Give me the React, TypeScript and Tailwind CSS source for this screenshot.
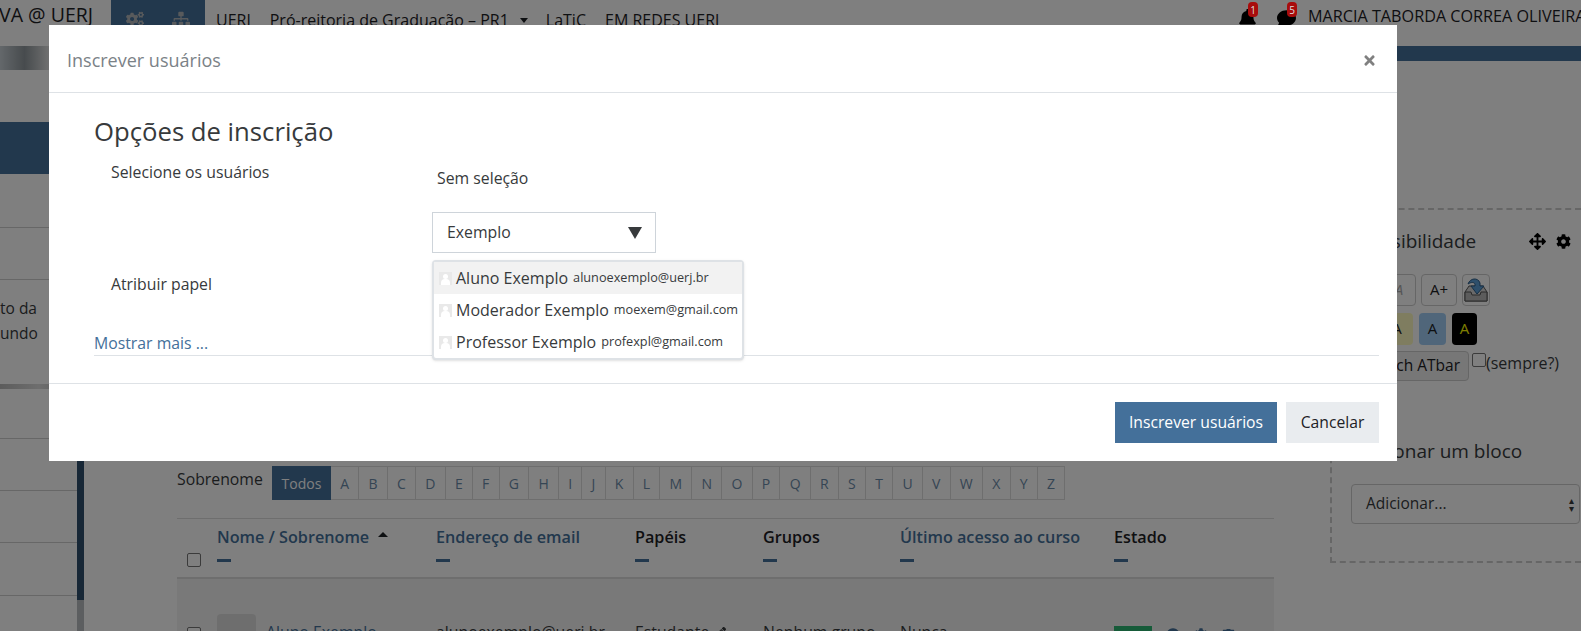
import { FaArrowsAlt, FaBell, FaCog, FaCogs, FaComment, FaInfoCircle, FaPencilAlt, FaSitemap, FaTimes, FaTrash } from 'react-icons/fa'

const LETTERS = 'ABCDEFGHIJKLMNOPQRSTUVWXYZ'.split('')
const COLUMNS = [
  { label: 'Endereço de email', link: true, width: 'w-[199px]' },
  { label: 'Papéis', link: false, width: 'w-[128px]' },
  { label: 'Grupos', link: false, width: 'w-[137px]' },
  { label: 'Último acesso ao curso', link: true, width: 'w-[214px]' },
  { label: 'Estado', link: false, width: 'w-[160px]' },
]
const USERS = [
  { name: 'Aluno Exemplo', email: 'alunoexemplo@uerj.br', active: true },
  { name: 'Moderador Exemplo', email: 'moexem@gmail.com', active: false },
  { name: 'Professor Exemplo', email: 'profexpl@gmail.com', active: false },
]

function Avatar() {
  return (
    <span className="relative inline-block h-[13px] w-[13px] shrink-0 overflow-hidden bg-[#e9e9e9]">
      <span className="absolute left-[4px] top-[2px] h-[5px] w-[5px] rounded-full bg-white" />
      <span className="absolute left-[2px] top-[7px] h-[8px] w-[9px] rounded-t bg-white" />
    </span>
  )
}

function Badge({ value }: { value: string }) {
  return (
    <span className="absolute -right-[1px] -top-[7px] flex h-[15px] w-[10px] items-center justify-center rounded-sm bg-[#a80c0c] text-[10px] leading-none text-[#dddddd]">
      {value}
    </span>
  )
}

function SaveIcon() {
  return (
    <svg width="26" height="28" viewBox="0 0 26 28">
      <path d="M2 16 L6 10 H20 L24 16 V25 H2 Z" fill="#d4d4d4" stroke="#555555" strokeWidth="1" />
      <path d="M2 16 H8 L9 19 H17 L18 16 H24 V25 H2 Z" fill="#b8b8b8" stroke="#555555" strokeWidth="1" />
      <path d="M5 8 C7 2 15 1 17 7 L17 10 H21 L14 18 L8 10 H12 L12 8 C11 6 8 6 5 8 Z" fill="#5c9fd6" stroke="#2f5f8a" strokeWidth="1" />
    </svg>
  )
}

function Nav() {
  return (
    <header className="flex h-[46px] shrink-0 items-start text-[16px] text-[#1d2125]">
      <div className="flex w-[111px] shrink-0 justify-end overflow-hidden pr-[18px] text-[19.5px]">
        <span className="whitespace-nowrap">AVA @ UERJ</span>
      </div>
      <div className="flex h-[46px] w-[94px] shrink-0 items-start gap-[28px] bg-[#44709a] pl-[15px] pt-[10px] text-[#b0b4b8]">
        <FaCogs size={18} />
        <FaSitemap size={18} />
      </div>
      <nav className="ml-[11px] mt-[8px] flex items-center gap-[19px] whitespace-nowrap">
        <span>UERJ</span>
        <span className="flex items-center gap-[11px]">
          Pró-reitoria de Graduação – PR1
          <span className="-mr-[1px] h-0 w-0 border-x-[4px] border-t-[5px] border-x-transparent border-t-[#1d2125]" />
        </span>
        <span>LaTiC</span>
        <span>EM REDES UERJ</span>
      </nav>
      <div className="ml-auto mt-[4px] flex w-[343px] shrink-0 items-start whitespace-nowrap">
        <span className="relative z-10 mt-[5px] w-[19px] text-black">
          <FaBell size={19} />
          <Badge value="1" />
        </span>
        <span className="relative z-10 ml-[20px] mt-[5px] w-[19px] text-black">
          <FaComment size={19} />
          <Badge value="5" />
        </span>
        <span className="ml-[12px] text-[16.2px]">MARCIA TABORDA CORREA OLIVEIRA</span>
      </div>
    </header>
  )
}

function Sidebar() {
  return (
    <aside className="relative w-[77px] shrink-0 text-[15.5px] text-[#373a3c]">
      <div className="h-[24px] w-[49px] bg-gradient-to-r from-[#c8d0d6] via-[#8f979c] to-[#e0e0e0]" />
      <div className="mt-[52px] h-[52px] bg-[#44709a]" />
      <div className="h-[54px] border-b border-[#cfcfcf]" />
      <div className="h-[52px] border-b border-[#cfcfcf]" />
      <div className="h-[104px] pt-[16px] leading-[25px]">
        <div className="w-[36px] whitespace-nowrap text-right">to da</div>
        <div className="w-[33px] whitespace-nowrap text-right">undo</div>
      </div>
      <div className="h-[5px] bg-gradient-to-r from-[#b8b8b8] via-[#dddddd] to-[#b0b0b0]" />
      <div className="h-[50px] border-b border-[#cfcfcf]" />
      <div className="h-[52px] border-b border-[#cfcfcf]" />
      <div className="h-[52px] border-b border-[#cfcfcf]" />
      <div className="h-[53px] border-b border-[#cfcfcf]" />
    </aside>
  )
}

function Main() {
  return (
    <main className="flex-1 pl-[93px] pt-[420px] text-[#373a3c]">
      <div className="flex items-start">
        <span className="mt-[2px] w-[95px] text-[15.8px]">Sobrenome</span>
        <div className="flex h-[34px] items-center text-[14px] text-[#6b8aa8]">
          <span className="flex h-[34px] w-[59px] items-center justify-center bg-[#44709a] text-white">Todos</span>
          <div className="flex h-[34px] border border-l-0 border-[#dddddd]">
            {LETTERS.map((letter) => (
              <span key={letter} className="flex items-center border-r border-[#dddddd] px-[9.23px] last:border-r-0">{letter}</span>
            ))}
          </div>
        </div>
      </div>
      <table className="mt-[18px] w-[1097px] table-fixed border-t border-[#dddddd] text-[15.8px]">
        <thead>
          <tr className="border-b-2 border-[#dddddd] text-left text-[16.2px]">
            <th className="h-[59px] w-[40px] pl-[10px] align-bottom pb-[10px]">
              <span className="block h-[14px] w-[14px] rounded-[2px] border border-[#767676] bg-white" />
            </th>
            <th className="w-[219px] align-top pt-[6px] font-semibold text-[#44709a]">
              <div className="flex items-center gap-[9px]">
                Nome / Sobrenome
                <span className="mb-[5px] h-0 w-0 border-x-[5px] border-b-[5px] border-x-transparent border-b-[#1d2125]" />
              </div>
              <span className="mt-[10px] block h-[3px] w-[14px] bg-[#44709a]" />
            </th>
            {COLUMNS.map((col) => (
              <th key={col.label} className={`${col.width} align-top pt-[6px] font-semibold ${col.link ? 'text-[#44709a]' : 'text-[#1d2125]'}`}>
                {col.label}
                <span className="mt-[10px] block h-[3px] w-[14px] bg-[#44709a]" />
              </th>
            ))}
          </tr>
        </thead>
        <tbody>
          <tr className="bg-[#f2f2f2] align-top">
            <td className="pl-[10px] pt-[48px]">
              <span className="block h-[14px] w-[14px] rounded-[2px] border border-[#767676] bg-white" />
            </td>
            <td className="pt-[35px]">
              <div className="flex items-start gap-[10px]">
                <span className="h-[39px] w-[39px] shrink-0 rounded bg-[#dddddd]" />
                <span className="mt-[7px] whitespace-nowrap text-[#44709a]">Aluno Exemplo</span>
              </div>
            </td>
            <td className="whitespace-nowrap pt-[42px]">alunoexemplo@uerj.br</td>
            <td className="pt-[42px]">
              <span className="flex items-center gap-[6px]">Estudante <FaPencilAlt size={11} /></span>
            </td>
            <td className="pt-[42px]">Nenhum grupo</td>
            <td className="pt-[42px]">Nunca</td>
            <td className="pt-[47px]">
              <div className="flex items-center gap-[14px] text-[#44709a]">
                <span className="bg-[#2cb673] px-[4px] text-[13px] text-white">Ativo</span>
                <FaInfoCircle size={14} />
                <FaCog size={14} />
                <FaTrash size={13} />
              </div>
            </td>
          </tr>
        </tbody>
      </table>
    </main>
  )
}

function RightColumn() {
  return (
    <aside className="w-[251px] shrink-0 text-[#373a3c]">
      <div className="h-[15px] bg-[#44709a]" />
      <div className="mt-[147px] h-[355px] border-y-2 border-l-2 border-dashed border-[#cccccc] pl-[19px]">
        <div className="mt-[17px] flex items-center">
          <span className="whitespace-nowrap text-[19px]">Acessibilidade</span>
          <span className="ml-[53px] flex items-center gap-[10px] text-black">
            <FaArrowsAlt size={17} />
            <FaCog size={15} />
          </span>
        </div>
        <div className="mt-[18px] flex gap-[5px] pl-[31px] text-[15px]">
          <span className="flex h-[32px] w-[34px] items-center justify-center rounded border border-[#cccccc] italic text-[#aaaaaa]">A</span>
          <span className="flex h-[32px] w-[36px] items-center justify-center rounded border border-[#cccccc] text-[#1d2125]">A+</span>
          <span className="flex h-[32px] w-[28px] items-center justify-center rounded border border-[#cccccc]"><SaveIcon /></span>
        </div>
        <div className="mt-[7px] flex gap-[6px] pl-[30px] text-[15px]">
          <span className="flex h-[32px] w-[32px] items-center justify-center rounded bg-[#fffbc0] text-[#1d2125]">A</span>
          <span className="flex h-[32px] w-[27px] items-center justify-center rounded bg-[#a0cdf5] text-[#1d2125]">A</span>
          <span className="flex h-[32px] w-[25px] items-center justify-center rounded bg-black text-[#ffff00]">A</span>
        </div>
        <div className="mt-[6px] flex items-start">
          <span className="flex h-[30px] w-[118px] items-center justify-end whitespace-nowrap rounded border border-[#cccccc] bg-[#eeeeee] px-[8px] text-[15.5px] text-[#1d2125]">Launch ATbar</span>
          <span className="ml-[3px] mt-[2px] h-[14px] w-[14px] shrink-0 rounded-[2px] border border-[#767676]" />
          <span className="whitespace-nowrap text-[16px]">(sempre?)</span>
        </div>
        <div className="mt-[56px] whitespace-nowrap text-[19px]">Adicionar um bloco</div>
        <div className="mt-[19px] flex h-[40px] w-[229px] items-center justify-between rounded border border-[#cccccc] bg-white pl-[14px] pr-[5px] text-[15.5px]">
          Adicionar...
          <span className="text-[10px] leading-[8px]">▴<br />▾</span>
        </div>
      </div>
    </aside>
  )
}

function EnrolModal() {
  return (
    <div className="absolute left-[49px] top-[25px] z-20 flex h-[436px] w-[1348px] flex-col bg-white text-[#373a3c]">
      <div className="flex h-[68px] shrink-0 items-center justify-between border-b border-[#dee2e6] pl-[18px] pr-[20px] pt-[3px]">
        <span className="text-[18px] text-[#7b8287]">Inscrever usuários</span>
        <FaTimes size={15} className="text-[#808080]" />
      </div>
      <div className="relative h-[290px] shrink-0 pl-[45px] pr-[18px] pt-[24px]">
        <h2 className="text-[25.7px] leading-[30px]">Opções de inscrição</h2>
        <div className="mt-[14px] h-[116px] text-[15.8px]">
          <div className="flex">
            <span className="ml-[17px] w-[326px]">Selecione os usuários</span>
            <div className="pt-[6px]">
              <div>Sem seleção</div>
              <div className="-ml-[5px] mt-[21px] flex h-[41px] w-[224px] items-center justify-between border border-[#ced4da] pl-[14px] pr-[13px] pt-[2px]">
                Exemplo
                <span className="h-0 w-0 border-x-[7px] border-t-[12px] border-x-transparent border-t-[#373a3c]" />
              </div>
            </div>
          </div>
        </div>
        <div className="mt-[-4px] pl-[17px] text-[15.8px]">Atribuir papel</div>
        <div className="mt-[35px] border-b border-[#dee2e6] text-[15.8px] text-[#44709a]">Mostrar mais ...</div>
        <ul className="absolute left-[383px] top-[167px] w-[312px] rounded border-2 border-[#dee2e6] bg-white shadow-sm">
          {USERS.map((user) => (
            <li key={user.name} className={`flex h-[32px] items-center gap-[4px] whitespace-nowrap pl-[5px] ${user.active ? 'bg-[#f2f2f2]' : ''}`}>
              <Avatar />
              <span className="text-[16px]">{user.name}</span>
              <span className="ml-[1px] text-[12.7px]">{user.email}</span>
            </li>
          ))}
        </ul>
      </div>
      <div className="flex flex-1 items-center justify-end gap-[9px] border-t border-[#dee2e6] pr-[18px] text-[15.7px]">
        <button className="h-[41px] w-[162px] bg-[#44709a] text-white">Inscrever usuários</button>
        <button className="h-[41px] w-[93px] bg-[#e9ecef] text-[#1d2125]">Cancelar</button>
      </div>
    </div>
  )
}

export default function App() {
  return (
    <div className="relative flex h-[631px] w-[1581px] flex-col overflow-hidden bg-white font-['Open_Sans','Liberation_Sans',sans-serif]">
      <Nav />
      <div className="flex flex-1">
        <Sidebar />
        <div className="flex w-[7px] shrink-0 flex-col">
          <div className="h-[554px] bg-[#2f4f6d]" />
          <div className="flex-1 bg-[#b8bcc0]" />
        </div>
        <Main />
        <RightColumn />
      </div>
      <div className="absolute inset-0 z-[5] bg-black/50" />
      <EnrolModal />
    </div>
  )
}
